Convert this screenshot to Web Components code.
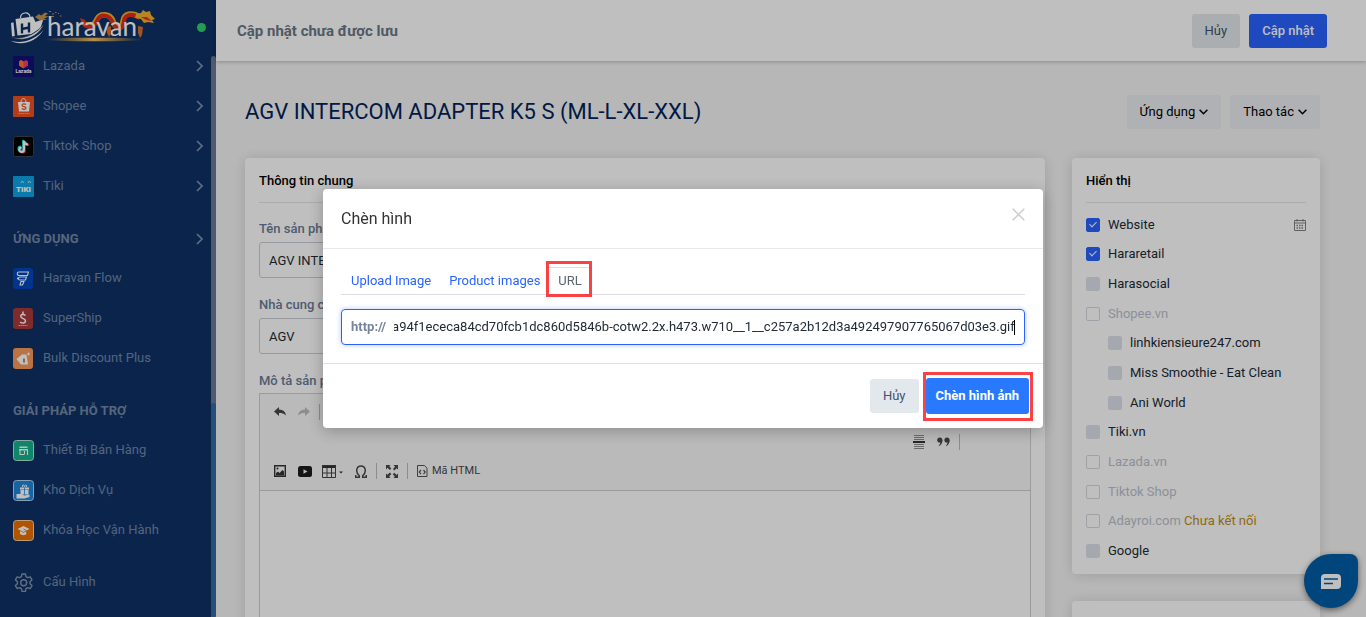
<!DOCTYPE html>
<html lang="vi">
<head>
<meta charset="utf-8">
<meta name="viewport" content="width=device-width, initial-scale=1">
<title>Haravan - Cập nhật sản phẩm</title>
<style>
  html, body { margin: 0; height: 100%; }
  body {
    font: 13px/18px Roboto, "Liberation Sans", sans-serif;
    color: #212b35;
    overflow: hidden;
  }
</style>
</head>
<body>
<admin-app></admin-app>

<script>
const define = (name, html, setup) => {
  const template = document.createElement('template');
  template.innerHTML = html;
  customElements.define(name, class extends HTMLElement {
    constructor() {
      super();
      this.attachShadow({ mode: 'open' }).append(template.content.cloneNode(true));
    }
    connectedCallback() {
      if (setup) setup(this, this.shadowRoot);
    }
  });
};

/* ---------- buttons ---------- */
define('ui-button', `
<style>
  :host { display: block; }
  button {
    display: flex; align-items: center; justify-content: center; gap: 4px;
    height: 34px; padding: 0 13px; border: 0; border-radius: 3px;
    background: #e3e8ed; color: #42526e; font: inherit; white-space: nowrap;
  }
  :host([kind=primary]) button { background: #2962ff; color: #fff; font-weight: 500; }
  :host([kind=soft]) button { background: #ebedf0; color: #000; }
  :host([kind=insert]) button { height: 36px; padding: 0 10px; background: #2979ff; color: #fff; font-weight: 700; }
  svg { display: none; width: 9px; height: 6px; }
  :host([kind=soft]) svg { display: block; }
</style>
<button type="button"><slot></slot><svg viewBox="0 0 9 6" fill="none" stroke="#000" stroke-width="1.5"><path d="M.6.8l3.9 4L8.400.8"/></svg></button>`);

/* ---------- sidebar ---------- */
define('nav-item', `
<style>
  :host { display: block; }
  a {
    display: flex; align-items: center; gap: 9px; height: 40px;
    padding: 0 8px 0 13px; color: #6f87a9; text-decoration: none;
  }
  .text { flex: 1; }
  .arrow { display: none; width: 7px; height: 12px; }
  :host([sub]) .arrow { display: block; }
</style>
<a href="#"><slot name="icon"></slot><span class="text"><slot></slot></span>
<svg class="arrow" viewBox="0 0 7 12" fill="none" stroke="#7d93b3" stroke-width="1.6"><path d="M1 1l5 5-5 5"/></svg></a>`);

define('nav-section', `
<style>
  :host { display: block; }
  h2 {
    display: flex; align-items: center; justify-content: space-between;
    height: 38px; margin: 0; padding: 14px 8px 0 13px;
    font: 700 13px/18px Roboto, sans-serif; color: #7389a9;
  }
  svg { display: none; width: 7px; height: 12px; }
  :host([sub]) svg { display: block; }
</style>
<h2><slot></slot><svg viewBox="0 0 7 12" fill="none" stroke="#7d93b3" stroke-width="1.6"><path d="M1 1l5 5-5 5"/></svg></h2>`);

define('brand-logo', `
<style>
  :host { display: flex; align-items: center; justify-content: space-between; height: 46px; padding: 0 10px 0 9px; }
  svg { display: block; width: 150px; height: 38px; margin-top: 10px; overflow: visible; }
  i { width: 9px; height: 9px; margin-top: 9px; border-radius: 50%; background: #2fd26f; }
</style>
<svg viewBox="9 10 150 38">
  <defs><linearGradient id="g"><stop offset="0" stop-color="#f0ad3a" stop-opacity="0"/><stop offset=".5" stop-color="#f6c060"/><stop offset="1" stop-color="#f0ad3a" stop-opacity="0"/></linearGradient></defs>
  <path d="M20.500 19c0-6 8.500-7 9.500-1" fill="none" stroke="#fff" stroke-width="1.200"/>
  <path d="M11 24l2.500-.8 1.300 13.800-2.800.5zM15.500 20l17.500-2.500 2.500 5.500 8-3-3 9-9 6-14 1.500z" fill="#fff"/>
  <path d="M22 24.500v10M29 23.500v10M22 30l7-1.500" stroke="#0f3164" stroke-width="2.400" fill="none"/>
  <path d="M10.500 38c11 3 24-1 33.500-13-5 12-19 19-33.500 13z" fill="#fff" stroke="#0f3164" stroke-width=".6"/>
  <path d="M10 41.500c11 4 25-.5 33.500-10.500-7 11.500-22 17-33.500 10.500z" fill="#fff"/>
  <path d="M35 18l4-3 2 1.500 4-3 3 1-3 2.500 4 .5-5 2 3 1-7 1z" fill="#c7924a"/>
  <path d="M49 12.500h2M52 15h2M55 13.500h1.500M50 17.500h4M58 14.500h1M60 17h1.500" stroke="#c7924a" stroke-width="1.200"/>
  <ellipse cx="94" cy="40.500" rx="50" ry="1.800" fill="url(#g)"/>
  <path d="M80 19l5 2 2 5 3 1-5 2-3-4z" fill="#e8391d"/>
  <path d="M85 25c6 4 10 0 12-5 3-6 13-6 16 2 3 9 9 9 10 0 1-8 9-9 17-4" fill="none" stroke="#f4b32a" stroke-width="5.500"/>
  <path d="M85 26c6 4 10 1 12.500-5 3-6 11-6 14.500 1 4 10 11 9 12 0 1-7 8-8 16-3" fill="none" stroke="#e02d18" stroke-width="4"/>
  <text x="47" y="36.500" font-family="Lato, sans-serif" font-size="26" fill="#fff">haravan</text>
  <path d="M136 15l5-1 2-3 3 2 4-1 1 4 4 4-3 1 2 3-6-1-4 1-3-4-6-1z" fill="#f5b32c"/>
  <path d="M141 18l6 0 5 4-6-1z" fill="#e8391d"/>
  <path d="M107 28l4-1v8l-2 3-2-4zM138 27l5 1-1 8-2 3-2-5z" fill="#d9702a"/>
</svg><i></i>`);

define('app-sidebar', `
<style>
  :host { display: flex; flex-direction: column; background: #0f3164; overflow: hidden; }
  .body { display: flex; flex: 1; min-height: 0; }
  nav { flex: 1; }
  nav-item svg { display: block; width: 21px; height: 21px; }
  .settings { display: block; margin-top: 12px; }
  .track { display: flex; flex-direction: column; width: 5px; margin-top: 10px; border-radius: 3px 3px 0 0; background: #6a7894; }
  .thumb { margin-top: 347px; flex: 1; border-radius: 3px; background: #33689e; }
</style>
<brand-logo></brand-logo>
<div class="body">
<nav aria-label="Menu">
  <nav-item sub><svg slot="icon" viewBox="0 0 21 21"><rect width="21" height="21" rx="1" fill="#10107a"/><path d="M6 5.500L8 4l2.500 1.500L13 4l2 1.500v4l-4.500 3L6 9.500z" fill="#f53d7a"/><path d="M6 5.500L8 4l2.500 1.500v7L6 9.500z" fill="#ff7a1a"/><text x="10.500" y="17" text-anchor="middle" font-family="Roboto, sans-serif" font-weight="700" font-size="5" fill="#fff">Lazada</text></svg>Lazada</nav-item>
  <nav-item sub><svg slot="icon" viewBox="0 0 21 21"><rect width="21" height="21" rx="1" fill="#f1501f"/><path d="M5 6h12l-1 9.500H6z" fill="#fff"/><path d="M8 6c0-4.500 5-4.500 5 0" fill="none" stroke="#fff"/><path d="M13 8.500c-1.500-1-4-.8-4 .8 0 1.700 4 1 4 2.800 0 1.600-2.700 1.600-4.200.5" fill="none" stroke="#f1501f" stroke-width="1.200"/><path d="M5.500 17.500h11" stroke="#f9a98c" stroke-dasharray="1.500 .6"/></svg>Shopee</nav-item>
  <nav-item sub><svg slot="icon" viewBox="0 0 21 21"><rect x=".5" y=".5" width="20" height="20" rx="2" fill="#000" stroke="#3a4252"/><path d="M10.600 4.500v8.700a2.300 2.300 0 1 1-2.300-2.300M10.600 4.500c.3 2.200 1.700 3.400 4 3.600" transform="translate(-.5 -.5)" fill="none" stroke="#25f4ee" stroke-width="2"/><path d="M11 5v8.700a2.300 2.300 0 1 1-2.300-2.300M11 5c.3 2.200 1.700 3.400 4 3.600" transform="translate(.8 .5)" fill="none" stroke="#fe2c55" stroke-width="2"/><path d="M11 5v8.700a2.300 2.300 0 1 1-2.300-2.300M11 5c.3 2.200 1.700 3.400 4 3.600" fill="none" stroke="#fff" stroke-width="2"/></svg>Tiktok Shop</nav-item>
  <nav-item sub><svg slot="icon" viewBox="0 0 21 21"><rect width="21" height="21" rx="1" fill="#0ea5e4"/><path d="M8 7c.2-2 2.500-2 2.700-.2M15 7c.2-2 2.500-2 2.700-.2" fill="none" stroke="#fff" stroke-width=".8"/><text x="10.500" y="15.500" text-anchor="middle" font-family="Roboto, sans-serif" font-weight="900" font-size="8" fill="#fff">TIKI</text></svg>Tiki</nav-item>
  <nav-section sub>ỨNG DỤNG</nav-section>
  <nav-item><svg slot="icon" viewBox="0 0 21 21"><rect width="20" height="21" rx="3" fill="#0046bd"/><path d="M6 4h9.500l-1 3.500H6a1.700 1.700 0 0 1 0-3.500M6.500 9h7l-1 3H7a1.500 1.500 0 0 1 0-3M8 13.500h3l-1.500 3.500H7z" fill="none" stroke="#fff" stroke-width="1.100"/><circle cx="5" cy="10.500" r="1.100" fill="#fff"/></svg>Haravan Flow</nav-item>
  <nav-item><svg slot="icon" viewBox="0 0 21 21"><rect width="20" height="21" rx="3" fill="#ab3a3a"/><path d="M12.500 7.500C10.500 5.500 7 6.500 8 9c.8 2 4.500 1.500 4.500 4 0 2.500-3.500 2.500-5.500 1M10 3.500v2.500" fill="none" stroke="#fff" stroke-width="1.500"/><path d="M5.500 17.500h9" stroke="#e9b9b9" stroke-dasharray="1.500 .5"/></svg>SuperShip</nav-item>
  <nav-item><svg slot="icon" viewBox="0 0 21 21"><rect width="20" height="21" rx="3" fill="#f79a5b"/><path d="M3.500 11L9 6.500h4.500l1.500 10H8z" fill="#fff"/><path d="M11 10.500v4" stroke="#b55a25" stroke-width="1.500"/><path d="M15.500 4.500v3M14 6h3" stroke="#fff"/></svg>Bulk Discount Plus</nav-item>
  <nav-section>GIẢI PHÁP HỖ TRỢ</nav-section>
  <nav-item><svg slot="icon" viewBox="0 0 21 21"><rect x=".5" y=".5" width="20" height="20" rx="3" fill="#16b38c" stroke="#b5e4d8"/><path d="M6.500 6.500h8v1.500h-8zM6 9h9v1.500H6z" fill="#fff"/><path d="M7 10v4.500h4M11.500 14.500V11M14.500 10v5" fill="none" stroke="#fff" stroke-width="1.100"/></svg>Thiết Bị Bán Hàng</nav-item>
  <nav-item><svg slot="icon" viewBox="0 0 21 21"><rect x=".5" y=".5" width="20" height="20" rx="3" fill="#1f86dd" stroke="#b6d6f3"/><path d="M7 7.500h9v2H7zM7.500 10h8v4.500h-8zM3.500 14h4l4 1.500 5-1v2.500l-5 1.500h-8z" fill="#fff"/><path d="M9.500 7c-.5-3 1.500-2.500 2 0 .5-2.500 2.500-3 2 0" fill="none" stroke="#fff"/><path d="M11.500 7.500v7" stroke="#1f86dd" stroke-width=".8"/></svg>Kho Dịch Vụ</nav-item>
  <nav-item><svg slot="icon" viewBox="0 0 21 21"><rect x=".5" y=".5" width="20" height="20" rx="3" fill="#ed7100" stroke="#f8cfa6"/><path d="M4.500 9l6-3 6 3-6 3z" fill="#fff"/><path d="M7 11v3c2 1.500 5 1.500 7 0v-3l-3.500 1.700z" fill="#fff"/><path d="M10.500 9l3 1.500v5" fill="none" stroke="#ed7100" stroke-width=".8"/></svg>Khóa Học Vận Hành</nav-item>
  <nav-item class="settings"><svg slot="icon" viewBox="0 0 21 21" fill="none" stroke="#8195b2" stroke-width="1.400" stroke-linejoin="round"><path d="M9 2h3.400l.6 2.700 1.700 1 2.600-.8 1.700 2.900-2 1.900v2l2 1.900-1.700 2.900-2.600-.8-1.700 1-.6 2.700H9l-.6-2.700-1.700-1-2.600.8-1.700-2.900 2-1.900v-2l-2-1.900 1.700-2.900 2.600.8 1.700-1z"/><circle cx="10.700" cy="10.700" r="3"/></svg>Cấu Hình</nav-item>
</nav>
<div class="track"><div class="thumb"></div></div>
</div>`);

/* ---------- cards and fields ---------- */
define('ui-card', `
<style>
  :host { display: block; padding: 14px 14px 0; border-radius: 4px; background: #fff; box-shadow: 0 1px 14px rgba(0, 0, 0, .14); }
  h2 { margin: 0; padding-bottom: 12px; border-bottom: 1px solid #e3e5e8; font: 500 13px/18px Roboto, sans-serif; color: #000; }
</style>
<h2><slot name="title"></slot></h2><slot></slot>`);

define('text-field', `
<style>
  :host { display: block; margin-bottom: 18px; }
  label { display: block; margin-bottom: 4px; font-weight: 500; color: #697b98; }
  input {
    display: block; box-sizing: border-box; width: 100%; height: 36px; padding: 0 9px;
    border: 1px solid #c9cfd6; border-radius: 3px; background: transparent; font: inherit; color: #212b35;
  }
</style>
<label for="f"></label><input id="f" type="text">`, (el, root) => {
  root.querySelector('label').textContent = el.getAttribute('label');
  root.querySelector('input').value = el.getAttribute('value');
});

define('rich-editor', `
<style>
  :host { display: block; }
  .name { display: block; margin-bottom: 3px; font-weight: 500; color: #697b98; }
  .box { border: 1px solid #cfcfcf; }
  .bar { padding: 3px 14px 4px; border-bottom: 1px solid #cfcfcf; background: #f8f8f8; }
  .row { display: flex; align-items: center; height: 30px; gap: 12px; }
  .row.middle { justify-content: flex-end; padding-right: 59px; height: 29px; }
  button { display: flex; align-items: center; gap: 4px; padding: 0; border: 0; background: none; font: 11px/16px Roboto, sans-serif; color: #484848; }
  button svg { display: block; }
  .table { margin-left: -2px; }
  hr { width: 1px; height: 16px; margin: 0 -3px; border: 0; background: #bcbcbc; }
  textarea { display: block; box-sizing: border-box; width: 100%; height: 240px; border: 0; resize: none; background: #fff; }
</style>
<label class="name" for="body">Mô tả sản phẩm</label>
<div class="box">
  <div class="bar">
    <div class="row">
      <button aria-label="Hoàn tác"><svg width="12" height="10" viewBox="0 0 12 10"><path d="M5 0v2.600c4 .2 6.500 2 7 6C10 6.500 8 6 5 6v3L0 4.500z" fill="#484848"/></svg></button>
      <button aria-label="Làm lại"><svg width="12" height="10" viewBox="0 0 12 10"><path d="M7 0v2.600C3 2.800.5 4.600 0 8.600 2 6.500 4 6 7 6v3l5-4.500z" fill="#bcbcbc"/></svg></button>
      <hr>
    </div>
    <div class="row middle">
      <button aria-label="Ngắt trang"><svg width="12" height="14" viewBox="0 0 12 14"><path d="M1 .5h10M1 2.500h10M1 4.500h10M1 9.500h10M1 11.500h10M1 13.500h10" stroke="#8c8c8c"/><path d="M0 7h12" stroke="#333" stroke-width="2"/></svg></button>
      <button aria-label="Trích dẫn"><svg width="13" height="10" viewBox="0 0 13 10" fill="#484848"><circle cx="2.800" cy="3" r="2.600"/><path d="M5.400 3c0 3.500-2 6-4 6.300 1.300-1.500 2-3 1.800-4.300z"/><circle cx="10" cy="3" r="2.600"/><path d="M12.600 3c0 3.500-2 6-4 6.300 1.300-1.500 2-3 1.800-4.300z"/></svg></button>
      <hr>
    </div>
    <div class="row">
      <button aria-label="Hình ảnh"><svg width="12" height="12" viewBox="0 0 12 12"><path d="M.7.7h10.600v10.600H.7z" fill="none" stroke="#333" stroke-width="1.400"/><path d="M2 10.500V8l2-1.500 1.500 1.500 3-3 1.500 1.500v4z" fill="#333"/><circle cx="3.500" cy="3.500" r="1" fill="#333"/></svg></button>
      <button aria-label="Video"><svg width="14" height="11" viewBox="0 0 14 11"><rect width="14" height="11" rx="2.500" fill="#1c1c1c"/><path d="M5.500 3.300v4.400l4-2.200z" fill="#f8f8f8"/></svg></button>
      <button aria-label="Bảng" class="table"><svg width="21" height="13" viewBox="0 0 21 13"><path d="M0 0h14v3H0z" fill="#333"/><path d="M.5.500h13v12H.5zM.5 8h13M5 3v10M9.500 3v10" fill="none" stroke="#444"/><path d="M17 6.500h4l-2 2z" fill="#333"/></svg></button>
      <button aria-label="Ký tự đặc biệt"><svg width="12" height="13" viewBox="0 0 12 13"><path d="M.7 10v2.200h3.600v-1.500C0 7 1.500 1 6 1s6 6 1.700 9.700v1.500h3.600V10" fill="none" stroke="#484848" stroke-width="1.500"/></svg></button>
      <hr>
      <button aria-label="Phóng to"><svg width="12" height="13" viewBox="0 0 12 13"><path d="M0 0h4.500L3.300 1.300l2 2.200-1.500 1.500-2.200-2.300L0 4.500zM12 0v4.500l-1.500-1.300-2.200 2.200L7 4l2-2.300L7.500 0zM0 13V8.500l1.500 1.300L3.800 7.500 5.300 9 3.200 11.500 4.500 13zM12 13H7.500l1.300-1.400L6.800 9.200l1.500-1.500 2.200 2.200L12 8.500z" fill="#484848"/></svg></button>
      <hr>
      <button><svg width="11" height="12" viewBox="0 0 11 12" fill="none" stroke="#555"><path d="M.5.500h7l2.500 2.700v8.300H.5z"/><path d="M4 5L2.300 7 4 9.200M6.500 5l1.700 2-1.700 2.200" stroke-width="1.200"/></svg>Mã HTML</button>
    </div>
  </div>
  <textarea id="body"></textarea>
</div>`);

define('check-item', `
<style>
  :host { display: flex; align-items: center; }
  :host([nested]) { padding-left: 22px; }
  label { display: flex; align-items: center; gap: 8px; flex: 1; }
  input {
    appearance: none; box-sizing: border-box; position: relative; width: 14px; height: 14px; margin: 0;
    border: 1px solid #dce2ea; border-radius: 2px; background: #dce2ea;
  }
  input:checked { background: #2962ff; border-color: #2962ff; }
  input:checked::after {
    content: ""; position: absolute; left: 4px; top: 1px; width: 3px; height: 6px;
    border: solid #fff; border-width: 0 1px 1px 0; transform: rotate(45deg);
  }
  input:disabled { background: transparent; border-color: #d3d7dc; }
  :host([disabled]) { color: #bac1cc; }
</style>
<label><input type="checkbox"><span><slot></slot></span></label><slot name="extra"></slot>`, (el, root) => {
  const box = root.querySelector('input');
  box.checked = el.hasAttribute('checked');
  box.disabled = el.hasAttribute('disabled');
});

define('channel-list', `
<style>
  :host { display: grid; grid-template-rows: repeat(12, 1fr); height: 356px; padding: 7px 0 8px; }
  svg { display: block; width: 12px; height: 12px; }
  .warn { color: #bf8d15; }
</style>
<check-item checked>Website<svg slot="extra" viewBox="0 0 12 12" fill="none" stroke="#808080"><path d="M.5 1.500h11v10H.5zM.5 4h11M3 0v2.500M9 0v2.500"/><path d="M2.500 6.500h7M2.500 9h7" stroke-dasharray="1.500 1" stroke-width="1.500"/></svg></check-item>
<check-item checked>Hararetail</check-item>
<check-item>Harasocial</check-item>
<check-item disabled>Shopee.vn</check-item>
<check-item nested>linhkiensieure247.com</check-item>
<check-item nested>Miss Smoothie - Eat Clean</check-item>
<check-item nested>Ani World</check-item>
<check-item>Tiki.vn</check-item>
<check-item disabled>Lazada.vn</check-item>
<check-item disabled>Tiktok Shop</check-item>
<check-item disabled>Adayroi.com <span class="warn">Chưa kết nối</span></check-item>
<check-item>Google</check-item>`);

/* ---------- main page ---------- */
define('save-bar', `
<style>
  :host { display: flex; align-items: center; gap: 9px; height: 61px; padding: 0 39px 0 21px; background: #fff; box-shadow: 0 1px 4px rgba(0, 0, 0, .25); }
  strong { flex: 1; font: 700 15px/20px Roboto, sans-serif; color: #697886; }
</style>
<strong>Cập nhật chưa được lưu</strong><ui-button>Hủy</ui-button><ui-button kind="primary">Cập nhật</ui-button>`);

define('product-page', `
<style>
  :host { display: block; padding: 33px 46px 0 29px; background: #f5f5f5; }
  header { display: flex; align-items: center; gap: 9px; height: 36px; margin-bottom: 28px; }
  h1 { flex: 1; margin: 0; font: 400 22px/28px Roboto, sans-serif; color: #00235c; }
  .columns { display: grid; grid-template-columns: 1fr 248px; gap: 27px; align-items: start; }
  .side { display: grid; gap: 27px; }
  .fields { padding-top: 17px; }
  channel-list { box-sizing: content-box; }
</style>
<header><h1>AGV INTERCOM ADAPTER K5 S (ML-L-XL-XXL)</h1><ui-button kind="soft">Ứng dụng</ui-button><ui-button kind="soft">Thao tác</ui-button></header>
<div class="columns">
  <ui-card><span slot="title">Thông tin chung</span>
    <div class="fields">
      <text-field label="Tên sản phẩm" value="AGV INTERCOM ADAPTER K5 S (ML-L-XL-XXL)"></text-field>
      <text-field label="Nhà cung cấp" value="AGV"></text-field>
      <rich-editor></rich-editor>
    </div>
  </ui-card>
  <div class="side">
    <ui-card><span slot="title">Hiển thị</span><channel-list></channel-list></ui-card>
    <ui-card><span slot="title">Nhóm sản phẩm</span></ui-card>
  </div>
</div>`);

define('chat-launcher', `
<style>
  :host { position: fixed; right: 8px; bottom: 9px; display: block; }
  button { display: grid; place-items: center; width: 54px; height: 54px; padding: 0; border: 0; border-radius: 50% 8px 50% 50%; background: #005da4; box-shadow: 0 2px 6px rgba(0, 0, 0, .5); }
  svg { display: block; width: 20px; height: 15px; }
</style>
<button type="button" aria-label="Chat"><svg viewBox="0 0 20 15"><path d="M4 0h12a4 4 0 0 1 4 4v7a4 4 0 0 1-4 4H0V4a4 4 0 0 1 4-4z" fill="#fff"/><path d="M3 5h14M3 9.500h9" stroke="#005da4" stroke-width="1.500"/></svg></button>`);

/* ---------- dialog ---------- */
define('image-dialog', `
<style>
  :host { position: fixed; inset: 0; display: grid; place-items: center; background: rgba(0, 0, 0, .25); }
  section { width: 720px; max-width: 100%; border-radius: 4px; background: #fff; box-shadow: 0 3px 16px rgba(0, 0, 0, .25); }
  header { display: flex; justify-content: space-between; padding: 19px 18px; border-bottom: 1px solid #e6e9ee; }
  h2 { margin: 0; font: 400 16px/21px Roboto, sans-serif; color: #333; }
  .close { display: block; width: 13px; height: 13px; padding: 0; border: 0; background: none; }
  .close svg { display: block; }
  .content { padding: 18px; }
  .tabs { display: flex; padding-left: 1px; border-bottom: 1px solid #dadce6; }
  .tabs a { position: relative; padding: 4px 9px; border-top: 1px solid transparent; color: #2962ff; text-decoration: none; }
  .tabs a[aria-selected=true] { border-top-color: #dee2e6; color: #5a6570; }
  .mark { position: absolute; border: 3px solid #fa4143; pointer-events: none; }
  .tabs .mark { inset: -7px -1px -3px -3px; }
  .address { position: relative; display: flex; align-items: center; height: 34px; margin-top: 14px; padding: 0 9px; border: 1px solid #2962ff; border-radius: 4px; box-shadow: 0 0 5px rgba(41, 98, 255, .35); }
  .address label { font-weight: 700; color: #76849c; }
  .address input { flex: 1; min-width: 0; margin-left: 8px; padding: 0; border: 0; outline: 0; background: none; font: inherit; line-height: 18px; color: #212b35; }
  .caret { position: absolute; right: 9px; width: 1px; height: 15px; background: #000; }
  footer { display: flex; align-items: center; justify-content: flex-end; gap: 7px; padding: 14px; border-top: 1px solid #dee2e6; }
  .insert { position: relative; }
  .insert .mark { inset: -6px -4px -7px -3px; }
</style>
<section role="dialog" aria-label="Chèn hình">
  <header><h2>Chèn hình</h2><button class="close" aria-label="Đóng"><svg width="13" height="13" viewBox="0 0 13 13"><path d="M.7.7l11.600 11.600M12.300.7L.7 12.300" stroke="#ccc" stroke-width="1.500"/></svg></button></header>
  <div class="content">
    <div class="tabs" role="tablist">
      <a href="#" role="tab">Upload Image</a><a href="#" role="tab">Product images</a><a href="#" role="tab" aria-selected="true">URL<span class="mark"></span></a>
    </div>
    <div class="address"><label for="url">http://</label><input id="url" type="text" value="913a94f1ececa84cd70fcb1dc860d5846b-cotw2.2x.h473.w710__1__c257a2b12d3a492497907765067d03e3.gif"><span class="caret"></span></div>
  </div>
  <footer><ui-button>Hủy</ui-button><div class="insert"><ui-button kind="insert">Chèn hình ảnh</ui-button><span class="mark"></span></div></footer>
</section>`, (el, root) => {
  const input = root.querySelector('input');
  input.scrollLeft = input.scrollWidth;
});

define('admin-app', `
<style>
  :host { display: grid; grid-template-columns: 216px 1fr; height: 100vh; overflow: hidden; }
  main { display: grid; grid-template-rows: auto 1fr; min-width: 0; min-height: 0; isolation: isolate; }
  save-bar { position: relative; z-index: 1; }
  product-page { min-height: 0; overflow: hidden; }
</style>
<app-sidebar></app-sidebar>
<main><save-bar></save-bar><product-page></product-page></main>
<chat-launcher></chat-launcher>
<image-dialog></image-dialog>`);
</script>
</body>
</html>
